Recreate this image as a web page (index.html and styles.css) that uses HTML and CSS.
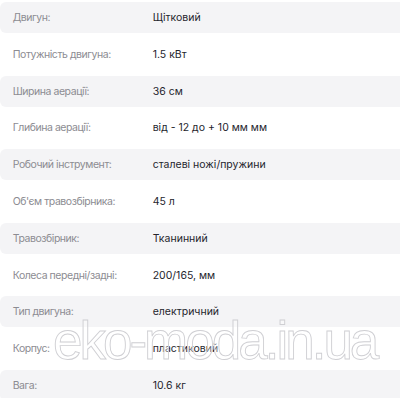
FILE: index.html
```html
<!DOCTYPE html>
<html lang="uk">
<head>
<meta charset="utf-8">
<link rel="stylesheet" href="styles.css">
</head>
<body>
<div class="specs">
  <div class="row alt"><span class="label">Двигун:</span><span class="value">Щітковий</span></div>
  <div class="row"><span class="label">Потужність двигуна:</span><span class="value">1.5 кВт</span></div>
  <div class="row alt"><span class="label">Ширина аерації:</span><span class="value">36 см</span></div>
  <div class="row"><span class="label">Глибина аерації:</span><span class="value">від - 12 до + 10 мм мм</span></div>
  <div class="row alt"><span class="label">Робочий інструмент:</span><span class="value">сталеві ножі/пружини</span></div>
  <div class="row"><span class="label">Об'єм травозбірника:</span><span class="value">45 л</span></div>
  <div class="row alt"><span class="label">Травозбірник:</span><span class="value">Тканинний</span></div>
  <div class="row"><span class="label">Колеса передні/задні:</span><span class="value">200/165, мм</span></div>
  <div class="row alt"><span class="label">Тип двигуна:</span><span class="value">електричний</span></div>
  <div class="row"><span class="label">Корпус:</span><span class="value">пластиковий</span></div>
  <div class="row alt"><span class="label">Вага:</span><span class="value">10.6 кг</span></div>
</div>
<div class="watermark">eko-moda.in.ua</div>
</body>
</html>
```

FILE: styles.css
```css
html, body {
  margin: 0;
  padding: 0;
  background: #ffffff;
  overflow: hidden;
}
body {
  position: relative;
  width: 400px;
  height: 398px;
  font-family: Inter, "Noto Sans", sans-serif;
}
.specs {
  display: flex;
  flex-direction: column;
  gap: 5.8px;
  padding-top: 2px;
}
.row {
  display: grid;
  grid-template-columns: 140px 1fr;
  align-items: center;
  height: 31px;
  padding-left: 12.7px;
  font-size: 10.5px;
  border-radius: 6px 0 0 6px;
}
.row.alt {
  background: #f4f4f6;
}
.label {
  color: #8c8c92;
  letter-spacing: -0.45px;
}
.value {
  color: #25252d;
}
.watermark {
  position: absolute;
  left: 53px;
  top: 314px;
  font-family: "Liberation Sans", Arial, sans-serif;
  font-size: 53px;
  letter-spacing: -3px;
  color: rgba(255, 255, 255, 0.35);
  -webkit-text-stroke: 0.9px #cfcfd3;
  white-space: nowrap;
  line-height: 1;
}
```
